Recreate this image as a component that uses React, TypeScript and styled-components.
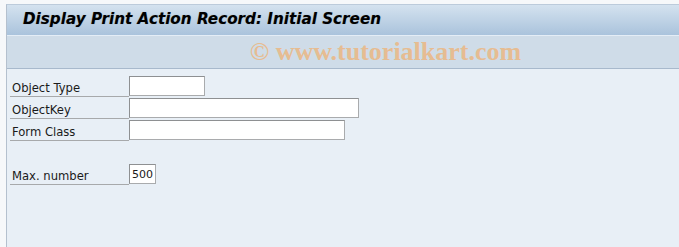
import styled, { createGlobalStyle } from "styled-components";

const GlobalStyle = createGlobalStyle`
  html, body {
    margin: 0;
    padding: 0;
    background: #f6f8fa;
  }
  * {
    box-sizing: border-box;
  }
`;

const fields = [
  { label: "Object Type", width: 76, value: "" },
  { label: "ObjectKey", width: 230, value: "" },
  { label: "Form Class", width: 216, value: "" },
];

const App = () => {
  return (
    <>
      <GlobalStyle />
      <Page>
        <Window>
          <TitleBar>Display Print Action Record: Initial Screen</TitleBar>
          <Toolbar>
            <Watermark>© www.tutorialkart.com</Watermark>
          </Toolbar>
          <Content>
            {fields.map((f) => (
              <Row key={f.label}>
                <Label>{f.label}</Label>
                <Field $width={f.width}>{f.value}</Field>
              </Row>
            ))}
            <Row />
            <Row>
              <Label>Max. number</Label>
              <Field $width={27}>500</Field>
            </Row>
          </Content>
        </Window>
      </Page>
    </>
  );
};

const Page = styled.div`
  display: flex;
  flex-direction: column;
  height: 247px;
  padding: 4px 0 0 6px;
  background: #f6f8fa;
`;

const Window = styled.div`
  flex: 1;
  display: flex;
  flex-direction: column;
  border-left: 1px solid #b4c0ce;
  border-top: 1px solid #bccbdb;
`;

const TitleBar = styled.div`
  height: 30px;
  display: flex;
  align-items: center;
  padding-left: 16px;
  padding-bottom: 2px;
  background: linear-gradient(#d4e2ef, #aac3dc);
  font-family: "DejaVu Sans", "Liberation Sans", sans-serif;
  font-size: 15.2px;
  font-weight: bold;
  font-style: italic;
  color: #000;
  text-shadow: 0 0 1px rgba(0, 0, 0, 0.25);
`;

const Toolbar = styled.div`
  height: 34px;
  display: flex;
  align-items: center;
  justify-content: center;
  padding-left: 85px;
  background: #cfdce8;
  border-top: 1px solid #e4edf6;
  border-bottom: 1px solid #a8b9cc;
`;

const Watermark = styled.span`
  font-family: "Liberation Serif", serif;
  font-weight: bold;
  font-size: 26px;
  color: #e6bc92;
`;

const Content = styled.div`
  flex: 1;
  display: flex;
  flex-direction: column;
  padding: 6px 0 0 3px;
  background: #e8eff6;
`;

const Row = styled.div`
  height: 22px;
  display: flex;
  align-items: flex-end;
`;

const Label = styled.div`
  width: 119px;
  height: 22px;
  display: flex;
  align-items: center;
  padding: 4px 0 0 2px;
  border-bottom: 1px solid #a7a9ab;
  font-family: "DejaVu Sans", "Liberation Sans", sans-serif;
  font-size: 11.6px;
  color: #1a1a1a;
`;

const Field = styled.div<{ $width: number }>`
  width: ${({ $width }) => $width}px;
  height: 20px;
  margin-bottom: 1px;
  padding: 3px 0 0 2px;
  background: #fff;
  border: 1px solid #a9abad;
  border-top-color: #8e9092;
  border-left-color: #8e9092;
  font-family: "DejaVu Sans", "Liberation Sans", sans-serif;
  font-size: 11px;
  color: #1a1a1a;
`;

export default App;
